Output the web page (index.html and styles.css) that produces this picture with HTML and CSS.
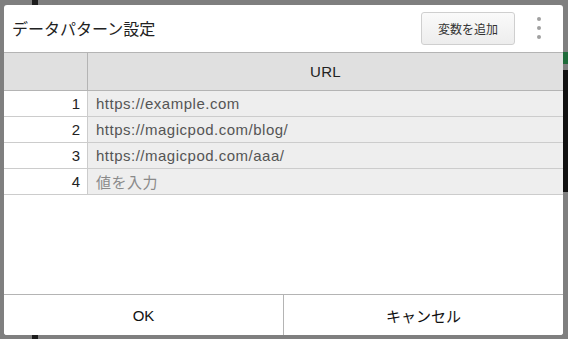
FILE: index.html
```html
<!DOCTYPE html>
<html lang="ja">
<head>
    <meta charset="UTF-8">
    <title>データパターン設定</title>
    <link rel="stylesheet" href="styles.css">
</head>
<body>
    <div class="backdrop">
        <div class="bg-bar bg-top"></div>
        <div class="bg-bar bg-bottom"></div>
        <div class="bg-side"></div>
        <div class="bg-green"></div>

        <div class="dialog">
            <div class="dialog-header">
                <h1 class="dialog-title">データパターン設定</h1>
                <button class="add-button">変数を追加</button>
                <div class="kebab">
                    <span></span><span></span><span></span>
                </div>
            </div>

            <div class="dialog-body">
                <table class="data-table">
                    <thead>
                        <tr>
                            <th class="col-index"></th>
                            <th>URL</th>
                        </tr>
                    </thead>
                    <tbody>
                        <tr><td class="col-index">1</td><td>https://example.com</td></tr>
                        <tr><td class="col-index">2</td><td>https://magicpod.com/blog/</td></tr>
                        <tr><td class="col-index">3</td><td>https://magicpod.com/aaa/</td></tr>
                        <tr><td class="col-index">4</td><td class="placeholder">値を入力</td></tr>
                    </tbody>
                </table>
            </div>

            <div class="dialog-footer">
                <button class="footer-button">OK</button>
                <button class="footer-button">キャンセル</button>
            </div>
        </div>
    </div>
</body>
</html>
```

FILE: styles.css
```css
html, body {
    margin: 0;
    padding: 0;
}
body {
    font-family: "Liberation Sans", "Noto Sans CJK JP", sans-serif;
    background-color: #7f7f7f;
    width: 568px;
    height: 339px;
    overflow: hidden;
}
.backdrop {
    position: relative;
    height: 339px;
    padding: 5px 5px 0 4px;
    box-sizing: border-box;
}

/* things behind the overlay */
.bg-bar {
    position: absolute;
    left: 32px;
    width: 6px;
    background-color: #1c1c1c;
}
.bg-top { top: 0; height: 5px; }
.bg-bottom { bottom: 0; height: 4px; }
.bg-side {
    position: absolute;
    right: 0;
    top: 70px;
    width: 5px;
    height: 122px;
    background-color: #111;
}
.bg-green {
    position: absolute;
    right: 0;
    top: 52px;
    width: 5px;
    height: 12px;
    background-color: #1f6b3a;
}

.dialog {
    position: relative;
    width: 559px;
    height: 330px;
    background: white;
    border-radius: 3px;
    display: flex;
    flex-direction: column;
    overflow: hidden;
}

.dialog-header {
    height: 48px;
    flex-shrink: 0;
    display: flex;
    align-items: center;
    padding: 0 8px;
    border-bottom: 1px solid #b4b4b4;
    box-sizing: border-box;
}
.dialog-title {
    flex: 1;
    margin: 0;
    font-size: 16px;
    font-weight: normal;
    color: #222;
    padding-bottom: 1px;
}
.add-button {
    width: 94px;
    height: 33px;
    font-family: inherit;
    font-size: 12px;
    color: #333;
    background: linear-gradient(#fafafa, #ededed);
    border: 1px solid #cfcfcf;
    border-radius: 3px;
    margin-right: 8px;
    margin-top: -1px;
}
.kebab {
    width: 32px;
    display: flex;
    flex-direction: column;
    align-items: center;
    gap: 5px;
    margin-top: -1px;
}
.kebab span {
    width: 4px;
    height: 4px;
    border-radius: 50%;
    background-color: #a0a0a0;
}

.dialog-body {
    flex: 1;
}
.data-table {
    width: 100%;
    border-collapse: collapse;
    font-size: 15px;
}
.data-table th {
    height: 37px;
    background-color: #e0e0e0;
    font-weight: normal;
    color: #222;
    border-bottom: 1px solid #b4b4b4;
    border-left: 1px solid #b4b4b4;
    padding: 0;
    letter-spacing: 0.3px;
}
.data-table th.col-index {
    border-left: none;
}
.data-table td {
    height: 25px;
    padding: 0 8px;
    background-color: #eeeeee;
    color: #555;
    border-bottom: 1px solid #cccccc;
    border-left: 1px solid #cccccc;
    letter-spacing: 0.5px;
}
.data-table td.col-index {
    width: 68px;
    background-color: white;
    color: #222;
    text-align: right;
    border-left: none;
    padding-right: 7px;
    letter-spacing: 0;
}
.data-table td.placeholder {
    color: #8a8a8a;
}

.dialog-footer {
    height: 40px;
    flex-shrink: 0;
    display: flex;
    border-top: 1px solid #b4b4b4;
}
.footer-button {
    flex: 1;
    font-family: inherit;
    font-size: 15px;
    color: #111;
    background: white;
    border: none;
    padding: 0;
}
.footer-button + .footer-button {
    border-left: 1px solid #b4b4b4;
}
```
